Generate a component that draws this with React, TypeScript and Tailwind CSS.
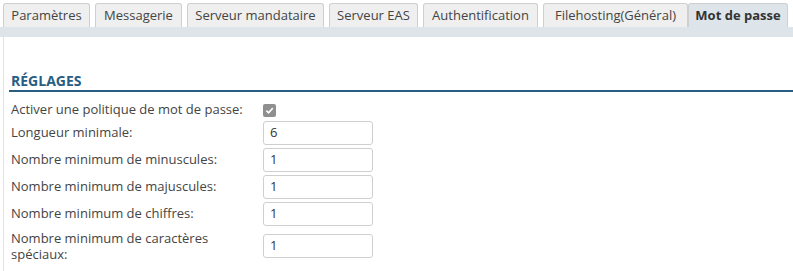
import React from "react";

const tabs = [
  { label: "Paramètres", w: 87 },
  { label: "Messagerie", w: 87 },
  { label: "Serveur mandataire", w: 137 },
  { label: "Serveur EAS", w: 89 },
  { label: "Authentification", w: 115 },
  { label: "Filehosting(Général)", w: 145 },
];

const rows = [
  { label: "Longueur minimale:", value: "6" },
  { label: "Nombre minimum de minuscules:", value: "1" },
  { label: "Nombre minimum de majuscules:", value: "1" },
  { label: "Nombre minimum de chiffres:", value: "1" },
];

export default function App() {
  return (
    <div
      className="w-[793px] h-[271px] bg-white text-[#444] overflow-hidden"
      style={{ fontFamily: '"Open Sans", "Noto Sans", sans-serif' }}
    >
      <div className="flex items-end gap-[5px] pl-[3px] pt-[3px]">
        {tabs.map((t) => (
          <div
            key={t.label}
            className="h-[24px] flex items-center justify-center border border-b-0 border-[#cfcfcf] rounded-t-[3px] bg-[#efefef] text-[13px] text-[#444]"
            style={{ width: t.w }}
          >
            {t.label}
          </div>
        ))}
        <div className="h-[24px] w-[100px] flex items-center justify-center border border-b-0 border-[#cfcfcf] rounded-t-[3px] bg-[#dde4ea] text-[13px] font-bold text-[#333] -ml-[5px]">
          Mot de passe
        </div>
      </div>
      <div className="h-[10px] bg-[#dde4ea]" />
      <div className="ml-[3px] border-l border-[#dde4ea] pl-[5px] pt-[35px] pb-[20px]">
        <div className="border-b-2 border-[#2a5d82] pb-[1px] pl-[2px]">
          <div className="text-[14px] font-bold text-[#2a5d82] leading-[17px]">RÉGLAGES</div>
        </div>
        <div className="pl-[2px] pt-[9px] text-[13px]">
          <div className="flex items-center h-[18px]">
            <div className="w-[252px]">Activer une politique de mot de passe:</div>
            <div className="w-[13px] h-[13px] rounded-[2px] bg-[#8f8f8f] flex items-center justify-center">
              <svg width="9" height="9" viewBox="0 0 10 10">
                <path d="M1.5 5.2 L4 7.6 L8.6 2.4" stroke="white" strokeWidth="1.8" fill="none" />
              </svg>
            </div>
          </div>
          {rows.map((r) => (
            <div key={r.label} className="flex items-center h-[27px]">
              <div className="w-[252px]">{r.label}</div>
              <div className="w-[110px] h-[24px] border border-[#cfcfcf] rounded-[3px] flex items-center px-[6px] text-[#333]">
                {r.value}
              </div>
            </div>
          ))}
          <div className="flex items-center mt-[3px]">
            <div className="w-[252px] leading-[16px]">
              Nombre minimum de caractères
              <br />
              spéciaux:
            </div>
            <div className="w-[110px] h-[24px] border border-[#cfcfcf] rounded-[3px] flex items-center px-[6px] text-[#333]">
              1
            </div>
          </div>
        </div>
      </div>
    </div>
  );
}
